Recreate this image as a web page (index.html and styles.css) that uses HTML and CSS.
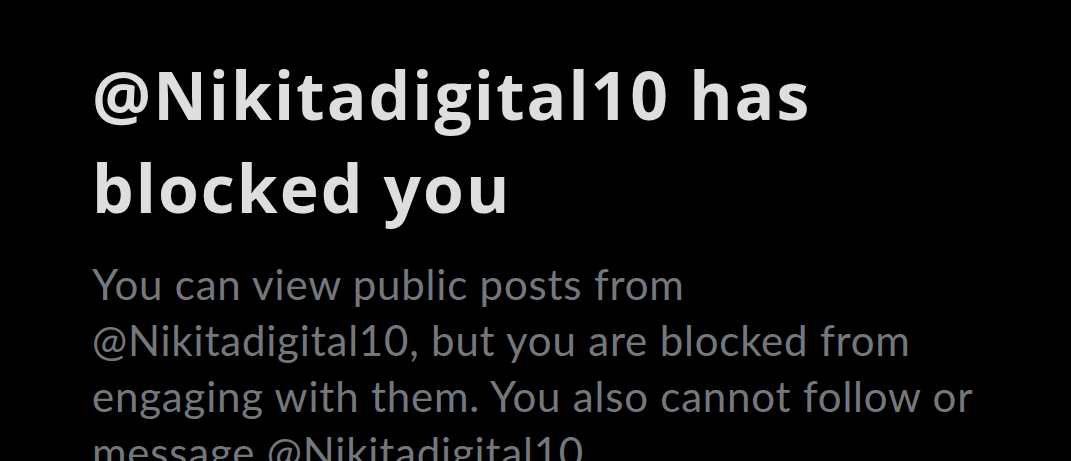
FILE: index.html
```html
<!DOCTYPE html>
<html lang="en">
<head>
<meta charset="utf-8">
<title>Blocked</title>
<link rel="stylesheet" href="styles.css">
</head>
<body>
<main class="notice">
  <h1 class="notice-title">@Nikitadigital10 has blocked you</h1>
  <p class="notice-text">You can view public posts from @Nikitadigital10, but you are blocked from engaging with them. You also cannot follow or message @Nikitadigital10.</p>
</main>
</body>
</html>
```

FILE: styles.css
```css
html, body {
  margin: 0;
  padding: 0;
  background: #000;
  height: 100%;
  overflow: hidden;
}
.notice {
  padding: 48px 60px 0 92px;
  display: flex;
  flex-direction: column;
  gap: 22px;
}
.notice-title {
  margin: 0;
  font-family: "Open Sans", Inter, sans-serif;
  font-weight: 700;
  font-size: 66px;
  line-height: 93px;
  color: #dedede;
  letter-spacing: 2px;
}
.notice-text {
  margin: 0;
  font-family: Lato, "Noto Sans", sans-serif;
  font-weight: 400;
  font-size: 42px;
  line-height: 56px;
  color: #74787d;
  letter-spacing: 0.8px;
}
```
